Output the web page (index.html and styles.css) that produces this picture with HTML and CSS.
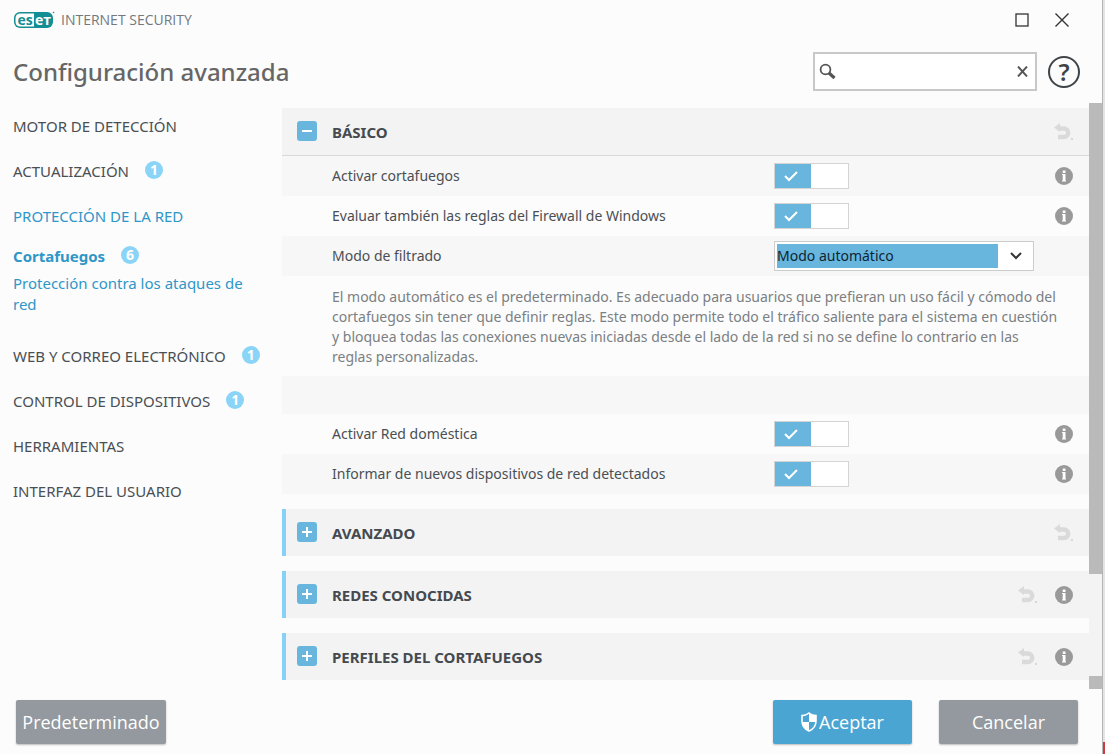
FILE: index.html
```html
<!DOCTYPE html>
<html lang="es">
<head>
<meta charset="utf-8">
<title>Configuración avanzada</title>
<link rel="stylesheet" href="styles.css">
</head>
<body>
<svg class="defs" aria-hidden="true">
  <symbol id="undo" viewBox="0 0 20 18">
    <path d="M5 5.500h6a3.700 3.700 0 0 1 0 8.500H5" fill="none" stroke="#dadada" stroke-width="4.400"/>
    <path d="M1 4.500 7 0v9z" fill="#dadada"/>
    <rect x="18.500" y="15" width="1" height="2" fill="#bbb"/>
  </symbol>
  <symbol id="info" viewBox="0 0 18 18">
    <circle cx="9" cy="9" r="9" fill="#999"/>
    <rect x="7.700" y="3.500" width="2.800" height="2.500" fill="#fff"/>
    <path d="M7 7h3.500v6.500h.5v1H7v-1h.7V8H7z" fill="#fff"/>
  </symbol>
  <symbol id="check" viewBox="0 0 14 11">
    <path d="m1 5 4 4 8-8" fill="none" stroke="#fff" stroke-width="2"/>
  </symbol>
  <symbol id="plus" viewBox="0 0 20 20">
    <path d="M5 10h10M10 5v10" stroke="#fff" stroke-width="2"/>
  </symbol>
  <symbol id="minus" viewBox="0 0 20 20">
    <path d="M5 10h10" stroke="#fff" stroke-width="2"/>
  </symbol>
</svg>
<div class="screen">
  <div class="window">
    <header class="titlebar">
      <svg class="logo" viewBox="0 0 41 18" role="img" aria-label="ESET">
        <rect x="0" y="1" width="39" height="16" rx="6" fill="#128e94"/>
        <path d="M20 2.500H6.500q-5 0-5 5v3q0 5 5 5H20z" fill="#fff"/>
        <text class="logo-text" x="3.500" y="13.500" fill="#128e94">es</text>
        <text class="logo-text" x="21" y="13.500" fill="#fff">eт</text>
        <circle cx="39.500" cy="1.500" r="0.800" fill="#128e94"/>
      </svg>
      <span class="product">INTERNET SECURITY</span>
      <button class="win-btn" aria-label="Maximizar"><svg width="14" height="14" viewBox="0 0 14 14"><rect x="1" y="1" width="12" height="12" fill="none" stroke="#333" stroke-width="1.300"/></svg></button>
      <button class="win-btn" aria-label="Cerrar"><svg width="14" height="14" viewBox="0 0 14 14"><path d="M.5.5l13 13M13.500.5l-13 13" stroke="#333" stroke-width="1.400"/></svg></button>
    </header>
    <div class="heading">
      <h1>Configuración avanzada</h1>
      <div class="search">
        <svg width="17" height="17" viewBox="0 0 17 17" aria-hidden="true"><circle cx="6.500" cy="6.500" r="4.900" fill="none" stroke="#555" stroke-width="1.800"/><path d="m10 10 5.500 5" stroke="#555" stroke-width="3.200"/></svg>
        <input type="text" aria-label="Buscar">
        <button class="clear" aria-label="Borrar"><svg width="11" height="11" viewBox="0 0 11 11"><path d="M1 .5 10 10.500M10 .5 1 10.500" stroke="#555" stroke-width="1.900"/></svg></button>
      </div>
      <button class="help" aria-label="Ayuda">?</button>
    </div>
    <div class="body">
      <nav class="sidebar">
        <a href="#">MOTOR DE DETECCIÓN</a>
        <a href="#">ACTUALIZACIÓN<span class="badge">1</span></a>
        <div class="group">
          <a class="active" href="#">PROTECCIÓN DE LA RED</a>
          <a class="active current" href="#">Cortafuegos<span class="badge">6</span></a>
          <a class="active sub" href="#">Protección contra los ataques de red</a>
        </div>
        <a href="#">WEB Y CORREO ELECTRÓNICO<span class="badge">1</span></a>
        <a href="#">CONTROL DE DISPOSITIVOS<span class="badge">1</span></a>
        <a href="#">HERRAMIENTAS</a>
        <a href="#">INTERFAZ DEL USUARIO</a>
      </nav>
      <main class="panel">
        <section>
          <div class="section-head open">
            <button class="fold" aria-label="Contraer"><svg><use href="#minus"/></svg></button>
            <h2>BÁSICO</h2>
            <button class="icon-btn" aria-label="Restablecer"><svg class="undo"><use href="#undo"/></svg></button>
          </div>
          <div class="row tint">
            <label for="fw">Activar cortafuegos</label>
            <span class="toggle"><input type="checkbox" id="fw" checked><svg><use href="#check"/></svg></span>
            <button class="icon-btn" aria-label="Información"><svg class="info"><use href="#info"/></svg></button>
          </div>
          <div class="row">
            <label for="win">Evaluar también las reglas del Firewall de Windows</label>
            <span class="toggle"><input type="checkbox" id="win" checked><svg><use href="#check"/></svg></span>
            <button class="icon-btn" aria-label="Información"><svg class="info"><use href="#info"/></svg></button>
          </div>
          <div class="row tint">
            <label for="mode">Modo de filtrado</label>
            <span class="select"><select id="mode"><option>Modo automático</option></select><svg viewBox="0 0 12 8"><path d="m1 1 5 5 5-5" fill="none" stroke="#333" stroke-width="2"/></svg></span>
          </div>
          <p class="description">El modo automático es el predeterminado. Es adecuado para usuarios que prefieran un uso fácil y cómodo del cortafuegos sin tener que definir reglas. Este modo permite todo el tráfico saliente para el sistema en cuestión y bloquea todas las conexiones nuevas iniciadas desde el lado de la red si no se define lo contrario en las reglas personalizadas.</p>
          <div class="spacer tint"></div>
          <div class="row">
            <label for="home">Activar Red doméstica</label>
            <span class="toggle"><input type="checkbox" id="home" checked><svg><use href="#check"/></svg></span>
            <button class="icon-btn" aria-label="Información"><svg class="info"><use href="#info"/></svg></button>
          </div>
          <div class="row tint">
            <label for="report">Informar de nuevos dispositivos de red detectados</label>
            <span class="toggle"><input type="checkbox" id="report" checked><svg><use href="#check"/></svg></span>
            <button class="icon-btn" aria-label="Información"><svg class="info"><use href="#info"/></svg></button>
          </div>
        </section>
        <section class="section-head">
          <button class="fold" aria-label="Expandir"><svg><use href="#plus"/></svg></button>
          <h2>AVANZADO</h2>
          <button class="icon-btn" aria-label="Restablecer"><svg class="undo"><use href="#undo"/></svg></button>
        </section>
        <section class="section-head">
          <button class="fold" aria-label="Expandir"><svg><use href="#plus"/></svg></button>
          <h2>REDES CONOCIDAS</h2>
          <button class="icon-btn" aria-label="Restablecer"><svg class="undo"><use href="#undo"/></svg></button>
          <button class="icon-btn" aria-label="Información"><svg class="info"><use href="#info"/></svg></button>
        </section>
        <section class="section-head">
          <button class="fold" aria-label="Expandir"><svg><use href="#plus"/></svg></button>
          <h2>PERFILES DEL CORTAFUEGOS</h2>
          <button class="icon-btn" aria-label="Restablecer"><svg class="undo"><use href="#undo"/></svg></button>
          <button class="icon-btn" aria-label="Información"><svg class="info"><use href="#info"/></svg></button>
        </section>
      </main>
      <div class="scrollbar" aria-hidden="true"><div class="thumb"></div><div class="track"></div><div class="arrow"></div></div>
    </div>
    <footer class="footer">
      <button class="btn default">Predeterminado</button>
      <button class="btn primary"><svg width="16" height="20" viewBox="0 0 16 20" aria-hidden="true"><path d="M8 1q3 2.500 7 2.500V9q0 7-7 10-7-3-7-10V3.500Q5 3.500 8 1z" fill="none" stroke="#fff" stroke-width="1.600"/><path d="M8 1q3 2.500 7 2.500V10H8zM8 10v9Q1.500 16 1 10z" fill="#fff"/></svg>Aceptar</button>
      <button class="btn">Cancelar</button>
    </footer>
  </div>
  <div class="backdrop" aria-hidden="true"></div>
</div>
</body>
</html>
```
FILE: styles.css
```css
* { box-sizing: border-box; }
body {
  margin: 0;
  background: #fcfcfc;
  color: #4a4f54;
  font-family: "Noto Sans", "Open Sans", sans-serif;
  font-size: 14px;
  line-height: 20px;
}
button {
  margin: 0;
  padding: 0;
  border: 0;
  background: none;
  font: inherit;
  color: inherit;
}
svg { display: block; }
.defs { display: none; }
h1, h2, p { margin: 0; }

.screen { display: flex; min-height: 100vh; }
.window { flex: 1; display: flex; flex-direction: column; min-width: 0; }
.backdrop {
  width: 3px;
  border-left: 1px solid #b5b5b5;
  background: linear-gradient(to top, #cc3a40 12px, #e4e4e4 12px);
}

.titlebar { display: flex; align-items: center; height: 40px; padding: 0 33px 0 14px; }
.logo { width: 41px; height: 18px; }
.logo-text { font: bold 14px "Open Sans", sans-serif; }
.product { flex: 1; margin-left: 6px; color: #73797d; font-family: "Open Sans", sans-serif; }
.win-btn { margin-left: 26px; }

.heading { display: flex; align-items: center; height: 63px; padding: 0 22px 0 13px; }
h1 { flex: 1; color: #666; font-size: 24px; font-weight: 500; line-height: 32px; }
.search {
  display: flex;
  align-items: center;
  width: 224px;
  height: 39px;
  padding: 0 7px 0 4px;
  border: 2px solid #c8c8c8;
  background: #fff;
}
.search input {
  flex: 1;
  min-width: 0;
  border: 0;
  outline: 0;
  background: none;
  font: inherit;
}
.help {
  width: 32px;
  height: 32px;
  margin-left: 11px;
  border: 2px solid #3f4448;
  border-radius: 50%;
  color: #3f4448;
  font-size: 24px;
  font-weight: 600;
  line-height: 28px;
}

.body { flex: 1; display: flex; }
.sidebar {
  display: flex;
  flex-direction: column;
  gap: 24px;
  width: 282px;
  padding: 13px 13px 0;
  font-size: 15px;
  line-height: 21px;
}
.sidebar a { display: flex; align-items: center; color: #4a4f54; text-decoration: none; }
.sidebar .active { color: #2f96c8; }
.sidebar .current { margin-top: 19px; font-weight: 700; }
.sidebar .sub { width: 232px; margin-top: 6px; }
.group { padding-bottom: 7px; }
.badge {
  width: 18px;
  height: 18px;
  margin: 0 0 3px 16px;
  border-radius: 50%;
  background: #8ad4f7;
  color: #fff;
  font-size: 14px;
  font-weight: 700;
  line-height: 18px;
  text-align: center;
}

.panel { flex: 1; display: flex; flex-direction: column; gap: 15px; min-width: 0; padding-top: 5px; }
.section-head {
  display: flex;
  align-items: center;
  height: 47px;
  padding: 0 16px 0 11px;
  border-left: 4px solid #85d1f7;
  background: #f3f3f3;
}
.section-head.open {
  height: 48px;
  padding-left: 15px;
  border-left: 0;
  border-bottom: 1px solid #d9d9d9;
}
h2 { flex: 1; margin-left: 15px; color: #444a4f; font-size: 15px; font-weight: 700; }
.fold { margin-bottom: 2px; border-radius: 3px; background: #68b6de; }
.fold svg { width: 20px; height: 20px; }
.icon-btn { margin-left: 18px; }
.undo { width: 20px; height: 18px; }
.info { width: 18px; height: 18px; }

.row {
  display: grid;
  grid-template-columns: 1fr 260px 18px;
  column-gap: 21px;
  align-items: center;
  height: 40px;
  padding: 0 16px 0 50px;
}
.tint { background: #f7f7f7; }
.row .icon-btn { margin: 0; }
.toggle, .select { display: grid; align-items: center; justify-content: start; }
.toggle > *, .select > * { grid-area: 1 / 1; }
.toggle input {
  appearance: none;
  width: 75px;
  height: 26px;
  margin: 0;
  border: 1px solid #d4d4d4;
  background: linear-gradient(to right, #68b6de 36px, #fff 36px);
}
.toggle svg { width: 14px; height: 11px; margin-left: 10px; pointer-events: none; }
.select select {
  appearance: none;
  width: 260px;
  height: 30px;
  padding: 2px 35px 2px 2px;
  border: 1px solid #ccc;
  border-radius: 0;
  background: linear-gradient(#68b6de, #68b6de) content-box, #fff;
  color: #0d2533;
  font: inherit;
}
.select svg { justify-self: end; width: 12px; height: 8px; margin-right: 12px; pointer-events: none; }
.description { padding: 11px 28px 9px 50px; color: #7b7f82; }
.spacer { height: 38px; }

.scrollbar { display: flex; flex-direction: column; width: 13px; background: #f3f3f3; }
.thumb { flex: 471; background: #bababa; }
.track { flex: 102; }
.arrow { height: 13px; background: #bababa; }

.footer { display: flex; gap: 27px; padding: 11px 24px 10px 16px; }
.btn {
  display: flex;
  align-items: center;
  justify-content: center;
  gap: 2px;
  width: 139px;
  height: 44px;
  border-radius: 2px;
  background: #93999e;
  box-shadow: 0 1px 2px #bbb;
  color: #fff;
  font-family: "Open Sans", sans-serif;
  font-size: 18px;
}
.btn.default { width: 150px; margin-right: auto; }
.btn.primary { background: #4ba5d3; }
```
